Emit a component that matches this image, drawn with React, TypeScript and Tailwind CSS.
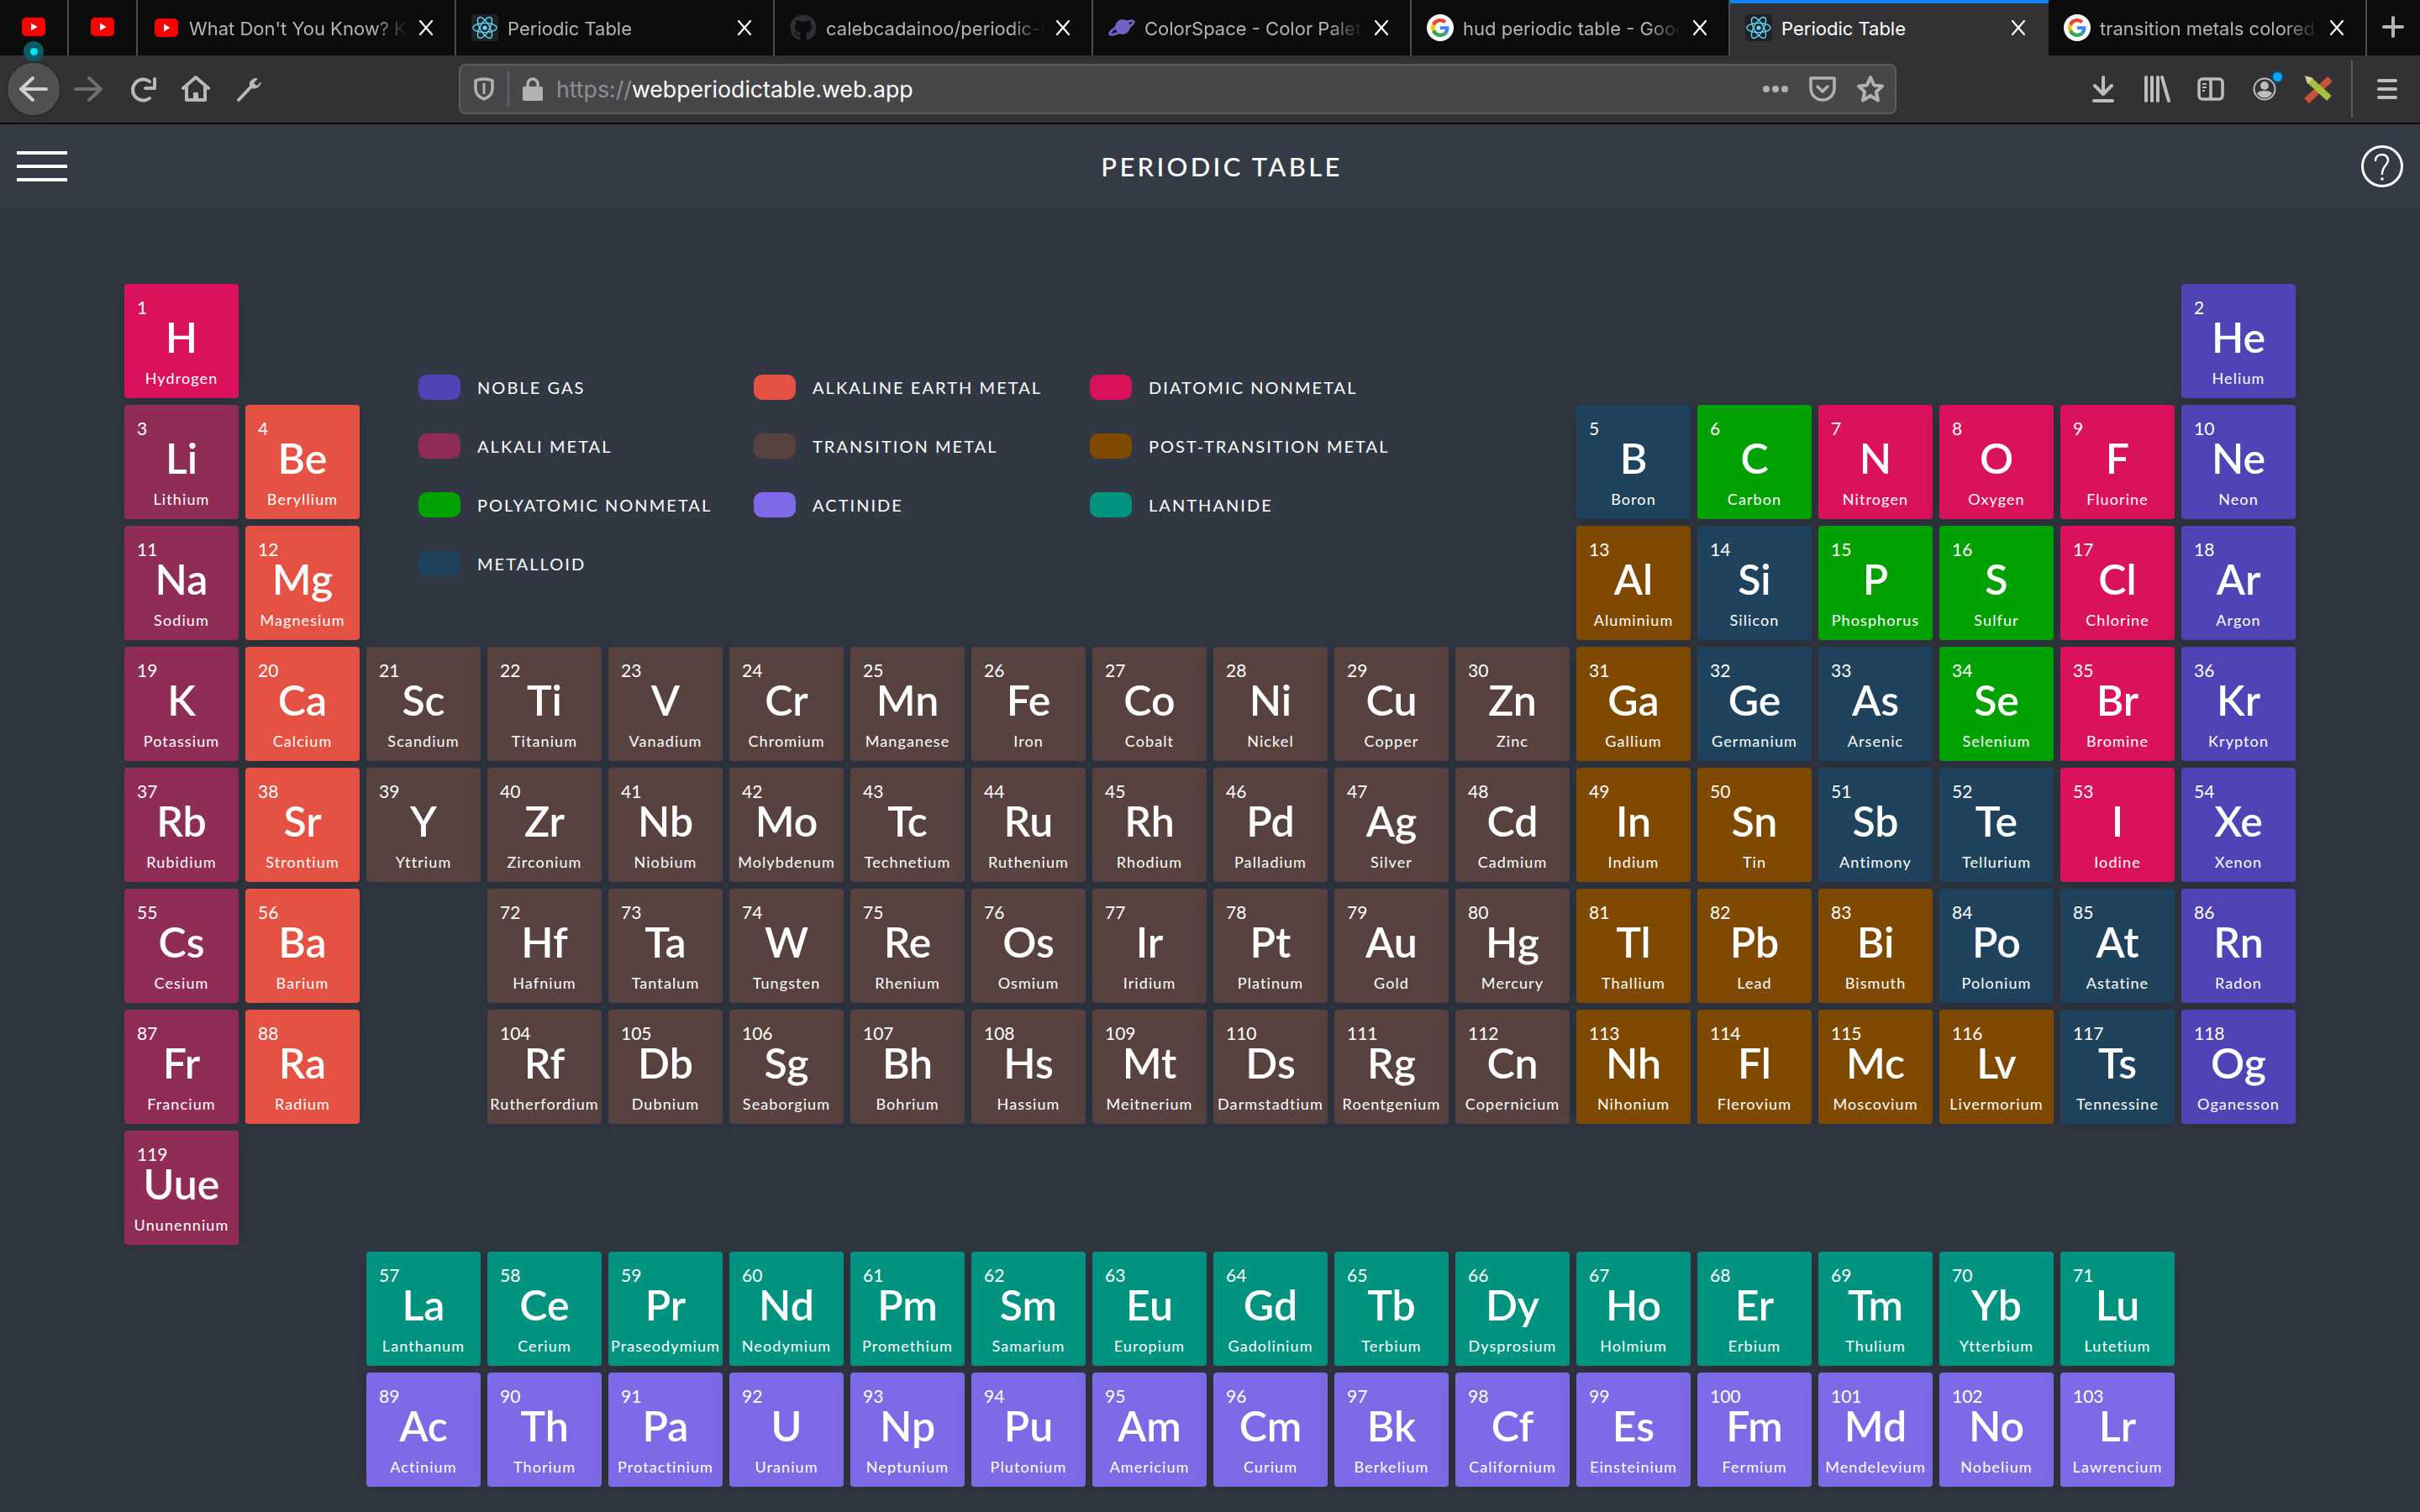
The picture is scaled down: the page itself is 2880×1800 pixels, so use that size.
import { FaGithub } from 'react-icons/fa';

type Cat = 'noble' | 'earth' | 'diatomic' | 'alkali' | 'transition' | 'post' | 'poly' | 'actinide' | 'lanthanide' | 'metalloid';

const catBg: Record<Cat, string> = {
  noble: 'bg-[#4f43b5]',
  earth: 'bg-[#e55244]',
  diatomic: 'bg-[#d9125b]',
  alkali: 'bg-[#8f2d56]',
  transition: 'bg-[#574240]',
  post: 'bg-[#7f4a00]',
  poly: 'bg-[#00a100]',
  actinide: 'bg-[#7e6ae6]',
  lanthanide: 'bg-[#009480]',
  metalloid: 'bg-[#1f435d]',
};

const legend: [Cat, string][] = [
  ['noble', 'NOBLE GAS'],
  ['earth', 'ALKALINE EARTH METAL'],
  ['diatomic', 'DIATOMIC NONMETAL'],
  ['alkali', 'ALKALI METAL'],
  ['transition', 'TRANSITION METAL'],
  ['post', 'POST-TRANSITION METAL'],
  ['poly', 'POLYATOMIC NONMETAL'],
  ['actinide', 'ACTINIDE'],
  ['lanthanide', 'LANTHANIDE'],
  ['metalloid', 'METALLOID'],
];

// number, symbol, name, category, grid row, grid column
type El = [number, string, string, Cat, number, number];

const elements: El[] = [
  [1, 'H', 'Hydrogen', 'diatomic', 1, 1],
  [2, 'He', 'Helium', 'noble', 1, 18],
  [3, 'Li', 'Lithium', 'alkali', 2, 1],
  [4, 'Be', 'Beryllium', 'earth', 2, 2],
  [5, 'B', 'Boron', 'metalloid', 2, 13],
  [6, 'C', 'Carbon', 'poly', 2, 14],
  [7, 'N', 'Nitrogen', 'diatomic', 2, 15],
  [8, 'O', 'Oxygen', 'diatomic', 2, 16],
  [9, 'F', 'Fluorine', 'diatomic', 2, 17],
  [10, 'Ne', 'Neon', 'noble', 2, 18],
  [11, 'Na', 'Sodium', 'alkali', 3, 1],
  [12, 'Mg', 'Magnesium', 'earth', 3, 2],
  [13, 'Al', 'Aluminium', 'post', 3, 13],
  [14, 'Si', 'Silicon', 'metalloid', 3, 14],
  [15, 'P', 'Phosphorus', 'poly', 3, 15],
  [16, 'S', 'Sulfur', 'poly', 3, 16],
  [17, 'Cl', 'Chlorine', 'diatomic', 3, 17],
  [18, 'Ar', 'Argon', 'noble', 3, 18],
  [19, 'K', 'Potassium', 'alkali', 4, 1],
  [20, 'Ca', 'Calcium', 'earth', 4, 2],
  [21, 'Sc', 'Scandium', 'transition', 4, 3],
  [22, 'Ti', 'Titanium', 'transition', 4, 4],
  [23, 'V', 'Vanadium', 'transition', 4, 5],
  [24, 'Cr', 'Chromium', 'transition', 4, 6],
  [25, 'Mn', 'Manganese', 'transition', 4, 7],
  [26, 'Fe', 'Iron', 'transition', 4, 8],
  [27, 'Co', 'Cobalt', 'transition', 4, 9],
  [28, 'Ni', 'Nickel', 'transition', 4, 10],
  [29, 'Cu', 'Copper', 'transition', 4, 11],
  [30, 'Zn', 'Zinc', 'transition', 4, 12],
  [31, 'Ga', 'Gallium', 'post', 4, 13],
  [32, 'Ge', 'Germanium', 'metalloid', 4, 14],
  [33, 'As', 'Arsenic', 'metalloid', 4, 15],
  [34, 'Se', 'Selenium', 'poly', 4, 16],
  [35, 'Br', 'Bromine', 'diatomic', 4, 17],
  [36, 'Kr', 'Krypton', 'noble', 4, 18],
  [37, 'Rb', 'Rubidium', 'alkali', 5, 1],
  [38, 'Sr', 'Strontium', 'earth', 5, 2],
  [39, 'Y', 'Yttrium', 'transition', 5, 3],
  [40, 'Zr', 'Zirconium', 'transition', 5, 4],
  [41, 'Nb', 'Niobium', 'transition', 5, 5],
  [42, 'Mo', 'Molybdenum', 'transition', 5, 6],
  [43, 'Tc', 'Technetium', 'transition', 5, 7],
  [44, 'Ru', 'Ruthenium', 'transition', 5, 8],
  [45, 'Rh', 'Rhodium', 'transition', 5, 9],
  [46, 'Pd', 'Palladium', 'transition', 5, 10],
  [47, 'Ag', 'Silver', 'transition', 5, 11],
  [48, 'Cd', 'Cadmium', 'transition', 5, 12],
  [49, 'In', 'Indium', 'post', 5, 13],
  [50, 'Sn', 'Tin', 'post', 5, 14],
  [51, 'Sb', 'Antimony', 'metalloid', 5, 15],
  [52, 'Te', 'Tellurium', 'metalloid', 5, 16],
  [53, 'I', 'Iodine', 'diatomic', 5, 17],
  [54, 'Xe', 'Xenon', 'noble', 5, 18],
  [55, 'Cs', 'Cesium', 'alkali', 6, 1],
  [56, 'Ba', 'Barium', 'earth', 6, 2],
  [72, 'Hf', 'Hafnium', 'transition', 6, 4],
  [73, 'Ta', 'Tantalum', 'transition', 6, 5],
  [74, 'W', 'Tungsten', 'transition', 6, 6],
  [75, 'Re', 'Rhenium', 'transition', 6, 7],
  [76, 'Os', 'Osmium', 'transition', 6, 8],
  [77, 'Ir', 'Iridium', 'transition', 6, 9],
  [78, 'Pt', 'Platinum', 'transition', 6, 10],
  [79, 'Au', 'Gold', 'transition', 6, 11],
  [80, 'Hg', 'Mercury', 'transition', 6, 12],
  [81, 'Tl', 'Thallium', 'post', 6, 13],
  [82, 'Pb', 'Lead', 'post', 6, 14],
  [83, 'Bi', 'Bismuth', 'post', 6, 15],
  [84, 'Po', 'Polonium', 'metalloid', 6, 16],
  [85, 'At', 'Astatine', 'metalloid', 6, 17],
  [86, 'Rn', 'Radon', 'noble', 6, 18],
  [87, 'Fr', 'Francium', 'alkali', 7, 1],
  [88, 'Ra', 'Radium', 'earth', 7, 2],
  [104, 'Rf', 'Rutherfordium', 'transition', 7, 4],
  [105, 'Db', 'Dubnium', 'transition', 7, 5],
  [106, 'Sg', 'Seaborgium', 'transition', 7, 6],
  [107, 'Bh', 'Bohrium', 'transition', 7, 7],
  [108, 'Hs', 'Hassium', 'transition', 7, 8],
  [109, 'Mt', 'Meitnerium', 'transition', 7, 9],
  [110, 'Ds', 'Darmstadtium', 'transition', 7, 10],
  [111, 'Rg', 'Roentgenium', 'transition', 7, 11],
  [112, 'Cn', 'Copernicium', 'transition', 7, 12],
  [113, 'Nh', 'Nihonium', 'post', 7, 13],
  [114, 'Fl', 'Flerovium', 'post', 7, 14],
  [115, 'Mc', 'Moscovium', 'post', 7, 15],
  [116, 'Lv', 'Livermorium', 'post', 7, 16],
  [117, 'Ts', 'Tennessine', 'metalloid', 7, 17],
  [118, 'Og', 'Oganesson', 'noble', 7, 18],
  [119, 'Uue', 'Ununennium', 'alkali', 8, 1],
  [57, 'La', 'Lanthanum', 'lanthanide', 9, 3],
  [58, 'Ce', 'Cerium', 'lanthanide', 9, 4],
  [59, 'Pr', 'Praseodymium', 'lanthanide', 9, 5],
  [60, 'Nd', 'Neodymium', 'lanthanide', 9, 6],
  [61, 'Pm', 'Promethium', 'lanthanide', 9, 7],
  [62, 'Sm', 'Samarium', 'lanthanide', 9, 8],
  [63, 'Eu', 'Europium', 'lanthanide', 9, 9],
  [64, 'Gd', 'Gadolinium', 'lanthanide', 9, 10],
  [65, 'Tb', 'Terbium', 'lanthanide', 9, 11],
  [66, 'Dy', 'Dysprosium', 'lanthanide', 9, 12],
  [67, 'Ho', 'Holmium', 'lanthanide', 9, 13],
  [68, 'Er', 'Erbium', 'lanthanide', 9, 14],
  [69, 'Tm', 'Thulium', 'lanthanide', 9, 15],
  [70, 'Yb', 'Ytterbium', 'lanthanide', 9, 16],
  [71, 'Lu', 'Lutetium', 'lanthanide', 9, 17],
  [89, 'Ac', 'Actinium', 'actinide', 10, 3],
  [90, 'Th', 'Thorium', 'actinide', 10, 4],
  [91, 'Pa', 'Protactinium', 'actinide', 10, 5],
  [92, 'U', 'Uranium', 'actinide', 10, 6],
  [93, 'Np', 'Neptunium', 'actinide', 10, 7],
  [94, 'Pu', 'Plutonium', 'actinide', 10, 8],
  [95, 'Am', 'Americium', 'actinide', 10, 9],
  [96, 'Cm', 'Curium', 'actinide', 10, 10],
  [97, 'Bk', 'Berkelium', 'actinide', 10, 11],
  [98, 'Cf', 'Californium', 'actinide', 10, 12],
  [99, 'Es', 'Einsteinium', 'actinide', 10, 13],
  [100, 'Fm', 'Fermium', 'actinide', 10, 14],
  [101, 'Md', 'Mendelevium', 'actinide', 10, 15],
  [102, 'No', 'Nobelium', 'actinide', 10, 16],
  [103, 'Lr', 'Lawrencium', 'actinide', 10, 17],
];

function YouTube() {
  return (
    <svg width="28" height="22" viewBox="0 0 28 22">
      <rect width="28" height="22" rx="5" fill="#ff0000" />
      <path d="M11 6.5 L18.5 11 L11 15.5 Z" fill="#fff" />
    </svg>
  );
}

function ReactLogo() {
  return (
    <svg width="32" height="32" viewBox="0 0 32 32">
      <rect width="32" height="32" rx="4" fill="#1f2125" />
      <circle cx="16" cy="16" r="2.6" fill="#61dafb" />
      <g fill="none" stroke="#61dafb" strokeWidth="1.4">
        <ellipse cx="16" cy="16" rx="14" ry="5.6" />
        <ellipse cx="16" cy="16" rx="14" ry="5.6" transform="rotate(60 16 16)" />
        <ellipse cx="16" cy="16" rx="14" ry="5.6" transform="rotate(120 16 16)" />
      </g>
    </svg>
  );
}

function Planet() {
  return (
    <svg width="34" height="32" viewBox="0 0 34 32">
      <circle cx="18" cy="15" r="9" fill="#7560c4" />
      <ellipse cx="17" cy="16" rx="16" ry="4" fill="none" stroke="#7560c4" strokeWidth="3" transform="rotate(-28 17 16)" />
    </svg>
  );
}

function GoogleG() {
  return (
    <svg width="32" height="32" viewBox="0 0 32 32">
      <circle cx="16" cy="16" r="16" fill="#fff" />
      <g transform="translate(5 5) scale(0.458)">
        <path fill="#ea4335" d="M24 9.5c3.5 0 6.7 1.2 9.2 3.6l6.9-6.9C35.9 2.4 30.5 0 24 0 14.6 0 6.5 5.4 2.6 13.2l8 6.2C12.5 13.7 17.800 9.5 24 9.500z" />
        <path fill="#4285f4" d="M47 24.500c0-1.600-.1-3.100-.4-4.500H24v9h12.900c-.6 3-2.200 5.500-4.700 7.200l7.700 6C44.400 38 47 31.800 47 24.500z" />
        <path fill="#fbbc05" d="M10.600 28.600c-.5-1.400-.8-3-.8-4.600s.3-3.200.8-4.600l-8-6.200C.9 16.400 0 20.100 0 24s.9 7.600 2.600 10.800l8-6.200z" />
        <path fill="#34a853" d="M24 48c6.500 0 11.900-2.100 15.900-5.800l-7.700-6c-2.200 1.500-5 2.300-8.200 2.300-6.200 0-11.500-4.200-13.400-9.900l-8 6.200C6.500 42.600 14.600 48 24 48z" />
      </g>
    </svg>
  );
}

function CloseX() {
  return (
    <svg width="20" height="20" viewBox="0 0 20 20" className="shrink-0" stroke="#fff" strokeWidth="2.2" strokeLinecap="round">
      <path d="M3 2 L17 18 M17 2 L3 18" />
    </svg>
  );
}

function Tab({ icon, title, active }: { icon: React.ReactNode; title: string; active?: boolean }) {
  return (
    <div className={active ? 'relative flex h-full w-[379px] items-center bg-[#323234] border-t-4 border-[#0a84ff] pb-[4px]' : 'flex h-full w-[379px] items-center border-r-2 border-[#4c4c4e]'}>
      <div className="flex w-[61px] shrink-0 justify-center pl-[6px]">{icon}</div>
      <div className={active ? 'w-[260px] whitespace-nowrap pt-[2px] text-[22px] text-white' : 'w-[260px] whitespace-nowrap pt-[2px] text-[22px] text-[#b4b4b4] [mask-image:linear-gradient(to_left,transparent,black_40px)]'}>
        {title}
      </div>
      <div className="ml-[12px]"><CloseX /></div>
    </div>
  );
}

function TabBar() {
  return (
    <div className="flex h-[66px] shrink-0 bg-[#0c0c0d] font-['Inter',sans-serif]">
      <div className="relative flex h-full w-[82px] items-center justify-center border-r-2 border-[#4c4c4e]">
        <div className="pb-[2px]"><YouTube /></div>
        <div className="absolute left-[28px] top-[49px] flex h-[24px] w-[24px] items-center justify-center rounded-full bg-[#0c5a63]">
          <div className="h-[9px] w-[9px] rounded-full bg-[#00e5f5]" />
        </div>
      </div>
      <div className="flex h-full w-[82px] items-center justify-center border-r-2 border-[#4c4c4e]">
        <div className="pb-[2px]"><YouTube /></div>
      </div>
      <Tab icon={<YouTube />} title="What Don't You Know? K" />
      <Tab icon={<ReactLogo />} title="Periodic Table" />
      <Tab icon={<FaGithub size={32} color="#2a3036" />} title="calebcadainoo/periodic-t" />
      <Tab icon={<Planet />} title="ColorSpace - Color Palet" />
      <Tab icon={<GoogleG />} title="hud periodic table - Goog" />
      <Tab icon={<ReactLogo />} title="Periodic Table" active />
      <Tab icon={<GoogleG />} title="transition metals colored" />
      <div className="flex flex-1 items-center justify-center pb-[2px] pr-[2px]">
        <svg width="28" height="28" viewBox="0 0 28 28" stroke="#b4b4b4" strokeWidth="4" strokeLinecap="round">
          <path d="M14 3 V25 M3 14 H25" />
        </svg>
      </div>
    </div>
  );
}

function Slot({ children }: { children: React.ReactNode }) {
  return <div className="flex h-[64px] w-[64px] items-center justify-center">{children}</div>;
}

function Toolbar() {
  return (
    <div className="flex h-[82px] shrink-0 items-center border-b-2 border-[#0c0c0d] bg-[#323234] pl-[7px]">
      <div className="flex h-[66px] w-[66px] items-center justify-center rounded-full border-2 border-[#2a2a2b] bg-[#505052]">
        <svg width="36" height="30" viewBox="0 0 36 30" fill="none" stroke="#cfcfcf" strokeWidth="4" strokeLinecap="round" strokeLinejoin="round">
          <path d="M33 15 H3 M17 2 L3 15 L17 28" />
        </svg>
      </div>
      <Slot>
        <svg width="36" height="30" viewBox="0 0 36 30" fill="none" stroke="#6f6f71" strokeWidth="4" strokeLinecap="round" strokeLinejoin="round">
          <path d="M3 15 H33 M19 2 L33 15 L19 28" />
        </svg>
      </Slot>
      <Slot>
        <svg width="32" height="32" viewBox="0 0 32 32" className="ml-[4px]" fill="none" stroke="#b9b9bb" strokeWidth="4" strokeLinecap="round" strokeLinejoin="round">
          <path d="M23 7 A12.500 12.500 0 1 0 23 27" />
          <path d="M29 4 V15 H18" />
        </svg>
      </Slot>
      <Slot>
        <svg width="34" height="32" viewBox="0 0 34 32" fill="none" stroke="#b9b9bb" strokeWidth="4" strokeLinecap="round" strokeLinejoin="round">
          <path d="M2 15 L17 2 L32 15" />
          <path d="M6 14 V29 H28 V14" />
          <rect x="14" y="20" width="6" height="9" fill="#b9b9bb" stroke="none" />
        </svg>
      </Slot>
      <Slot>
        <svg width="32" height="32" viewBox="0 0 32 32" fill="none" stroke="#b9b9bb" strokeLinecap="round">
          <path d="M3 29 L18 13" strokeWidth="4" />
          <path d="M30 7 L25 12 L21 9 L26 3 A10 10 0 0 0 16 8 A8 8 0 0 0 18 15 A9 9 0 0 0 30 7 Z" fill="#b9b9bb" stroke="none" />
        </svg>
      </Slot>
      <div className="ml-[217px] flex h-[60px] w-[1711px] items-center rounded-[8px] border-2 border-[#5c5c5e] bg-[#474749]">
        <div className="flex w-[56px] justify-center">
          <svg width="24" height="28" viewBox="0 0 24 28" fill="none" stroke="#b1b1b3" strokeWidth="3.500">
            <path d="M2 4 Q12 0 22 4 V14 Q22 22 12 26 Q2 22 2 14 Z" />
            <path d="M12 7 V20" strokeWidth="3" />
          </svg>
        </div>
        <div className="h-[42px] w-[2px] bg-[#5d6474]" />
        <div className="flex w-[56px] justify-center">
          <svg width="24" height="28" viewBox="0 0 24 28">
            <path d="M6 12 V8 A6 6 0 0 1 18 8 V12" fill="none" stroke="#b1b1b3" strokeWidth="3.500" />
            <rect x="0" y="11" width="24" height="17" rx="2" fill="#b1b1b3" />
          </svg>
        </div>
        <div className="font-['Inter',sans-serif] text-[26.700px] text-white">
          <span className="text-[#8f8f91]">https://</span>webperiodictable.web.app
        </div>
        <div className="ml-auto flex items-center pr-[2px]">
          <div className="flex w-[56px] justify-center gap-[3px]">
            <div className="h-[8px] w-[8px] rounded-full bg-[#b1b1b3]" />
            <div className="h-[8px] w-[8px] rounded-full bg-[#b1b1b3]" />
            <div className="h-[8px] w-[8px] rounded-full bg-[#b1b1b3]" />
          </div>
          <div className="flex w-[56px] justify-center">
            <svg width="32" height="30" viewBox="0 0 32 30" fill="none" stroke="#b1b1b3" strokeWidth="3.500" strokeLinecap="round" strokeLinejoin="round">
              <path d="M2 2 H30 V14 A14 14 0 0 1 2 14 Z" />
              <path d="M10 12 L16 18 L22 12" />
            </svg>
          </div>
          <div className="flex w-[56px] justify-center pl-[2px]">
            <svg width="34" height="34" viewBox="0 0 34 34" fill="none" stroke="#b1b1b3" strokeWidth="4" strokeLinejoin="round">
              <path d="M17 3 L21.200 12.500 L31 13.500 L23.800 20.200 L26 30.500 L17 25 L8 30.500 L10.200 20.200 L3 13.500 L12.800 12.500 Z" />
            </svg>
          </div>
        </div>
      </div>
      <div className="ml-auto flex items-center">
        <Slot>
          <svg width="26" height="32" viewBox="0 0 26 32" fill="none" stroke="#bdbdbf" strokeWidth="4" strokeLinecap="round" strokeLinejoin="round">
            <path d="M13 2 V21 M3 12 L13 22 L23 12" />
            <path d="M2 30 H24" />
          </svg>
        </Slot>
        <Slot>
          <svg width="32" height="32" viewBox="0 0 32 32" fill="none" stroke="#bdbdbf" strokeWidth="4" strokeLinecap="round">
            <path d="M3 2 V30 M10 2 V30 M17 2 V30 M22 2 L30 30" />
          </svg>
        </Slot>
        <Slot>
          <svg width="32" height="28" viewBox="0 0 32 28" fill="none" stroke="#bdbdbf" strokeWidth="3.500">
            <rect x="2" y="2" width="28" height="24" rx="4" />
            <path d="M16 2 V26" />
            <path d="M6 8 H11 M6 12 H11 M6 16 H9" strokeWidth="2" />
          </svg>
        </Slot>
        <Slot>
          <div className="relative">
            <svg width="28" height="28" viewBox="0 0 28 28">
              <circle cx="14" cy="14" r="12.500" fill="none" stroke="#bdbdbf" strokeWidth="2" />
              <circle cx="14" cy="10" r="5" fill="#bdbdbf" />
              <path d="M5 19 Q7 16 14 16 Q21 16 23 19 Q20 24.500 14 24.500 Q8 24.500 5 19 Z" fill="#bdbdbf" />
            </svg>
            <div className="absolute right-[-9px] top-[-9px] flex h-[16px] w-[16px] items-center justify-center rounded-full bg-[#16445c]">
              <div className="h-[11px] w-[11px] rounded-full bg-[#0aa5ff]" />
            </div>
          </div>
        </Slot>
        <Slot>
          <svg width="34" height="34" viewBox="0 0 34 34" fill="none">
            <path d="M3 31 L31 5" stroke="#c9533b" strokeWidth="8" />
            <path d="M7 7 L30 28" stroke="#a4c23f" strokeWidth="8" />
            <path d="M1 1 L11 4 L4 11 Z" fill="#d8cf9e" />
          </svg>
        </Slot>
        <div className="ml-[7px] h-[68px] w-[2px] bg-[#5a5a5c]" />
        <div className="flex w-[80px] flex-col items-center gap-[6px] pl-[2px]">
          <div className="h-[4px] w-[24px] rounded-full bg-[#bdbdbf]" />
          <div className="h-[4px] w-[24px] rounded-full bg-[#bdbdbf]" />
          <div className="h-[4px] w-[24px] rounded-full bg-[#bdbdbf]" />
        </div>
      </div>
    </div>
  );
}

function Header() {
  return (
    <header className="relative z-10 flex h-[100px] shrink-0 items-center bg-[#343a46] pl-[20px] pr-[20px] shadow-[0_4px_14px_rgba(0,0,0,0.12)]">
      <div className="flex w-[60px] flex-col gap-[12px]">
        <div className="h-[4px] bg-white" />
        <div className="h-[4px] bg-white" />
        <div className="h-[4px] bg-white" />
      </div>
      <h1 className="flex-1 pl-[18px] text-center text-[31px] font-medium tracking-[3.300px] text-white">PERIODIC TABLE</h1>
      <svg width="50" height="50" viewBox="0 0 50 50" fill="none" stroke="#fff" strokeLinecap="round">
        <circle cx="25" cy="25" r="23.500" strokeWidth="3" />
        <path d="M17 18 C17 13 21 11 25 11 C29 11 32 14 32 18 C32 23 25 25 25 34" strokeWidth="2.500" />
        <circle cx="25" cy="40" r="1.800" fill="#fff" stroke="none" />
      </svg>
    </header>
  );
}

function Legend() {
  return (
    <div className="col-start-3 col-span-10 row-start-1 row-span-3 pl-[62px] pt-[108px]">
      <div className="grid grid-cols-[399px_400px_auto] gap-y-[40px]">
        {legend.map(([cat, label]) => (
          <div key={label} className="flex h-[30px] items-center gap-[20px]">
            <div className={`h-[30px] w-[50px] rounded-[10px] ${catBg[cat]}`} />
            <span className="text-[20px] tracking-[2.050px] text-white">{label}</span>
          </div>
        ))}
      </div>
    </div>
  );
}

function Cell({ el }: { el: El }) {
  const [num, sym, name, cat, row, col] = el;
  return (
    <div
      className={`h-[136px] overflow-hidden rounded-[4px] pt-[17px] text-white shadow-[0_2px_18px_rgba(0,0,0,0.2)] ${catBg[cat]}`}
      style={{ gridRow: row, gridColumn: col }}
    >
      <div className="h-[21px] pl-[15px] text-[21px] leading-[21px]">{num}</div>
      <div className="h-[50px] text-center text-[50px] font-semibold leading-[50px]">{sym}</div>
      <div className="mt-[12px] whitespace-nowrap text-center text-[18px] leading-[24px] tracking-[1.100px]">{name}</div>
    </div>
  );
}

export default function App() {
  return (
    <div className="flex h-screen flex-col overflow-hidden bg-[#323843] font-['Lato',sans-serif]">
      <TabBar />
      <Toolbar />
      <Header />
      <main className="flex-1 pl-[148px] pt-[90px]">
        <div className="grid grid-cols-[repeat(18,136px)] auto-rows-[136px] gap-[8px]">
          <Legend />
          {elements.map(el => <Cell key={el[0]} el={el} />)}
        </div>
      </main>
    </div>
  );
}
